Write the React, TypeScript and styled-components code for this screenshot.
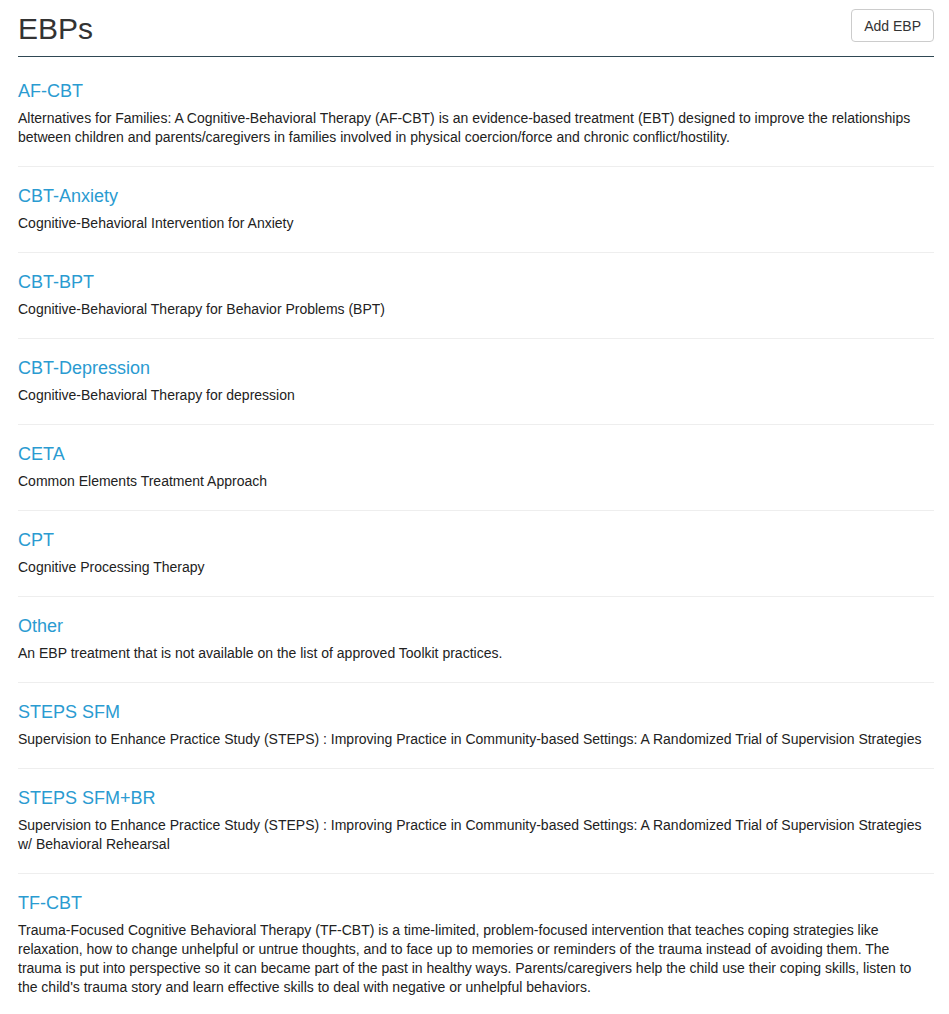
import styled, { createGlobalStyle } from 'styled-components';

interface Ebp {
    code: string;
    description: string;
}

const ebps: Ebp[] = [
    {
        code: 'AF-CBT',
        description:
            'Alternatives for Families: A Cognitive-Behavioral Therapy (AF-CBT) is an evidence-based treatment (EBT) designed to improve the relationships between children and parents/caregivers in families involved in physical coercion/force and chronic conflict/hostility.',
    },
    { code: 'CBT-Anxiety', description: 'Cognitive-Behavioral Intervention for Anxiety' },
    { code: 'CBT-BPT', description: 'Cognitive-Behavioral Therapy for Behavior Problems (BPT)' },
    { code: 'CBT-Depression', description: 'Cognitive-Behavioral Therapy for depression' },
    { code: 'CETA', description: 'Common Elements Treatment Approach' },
    { code: 'CPT', description: 'Cognitive Processing Therapy' },
    {
        code: 'Other',
        description: 'An EBP treatment that is not available on the list of approved Toolkit practices.',
    },
    {
        code: 'STEPS SFM',
        description:
            'Supervision to Enhance Practice Study (STEPS) : Improving Practice in Community-based Settings: A Randomized Trial of Supervision Strategies',
    },
    {
        code: 'STEPS SFM+BR',
        description:
            'Supervision to Enhance Practice Study (STEPS) : Improving Practice in Community-based Settings: A Randomized Trial of Supervision Strategies w/ Behavioral Rehearsal',
    },
    {
        code: 'TF-CBT',
        description:
            "Trauma-Focused Cognitive Behavioral Therapy (TF-CBT) is a time-limited, problem-focused intervention that teaches coping strategies like relaxation, how to change unhelpful or untrue thoughts, and to face up to memories or reminders of the trauma instead of avoiding them. The trauma is put into perspective so it can became part of the past in healthy ways. Parents/caregivers help the child use their coping skills, listen to the child's trauma story and learn effective skills to deal with negative or unhelpful behaviors.",
    },
];

const App = () => {
    return (
        <>
            <GlobalStyle />
            <Page>
                <Header>
                    <Title>EBPs</Title>
                    <AddButton type="button">Add EBP</AddButton>
                </Header>
                <List>
                    {ebps.map((ebp) => (
                        <Item key={ebp.code}>
                            <ItemTitle href="#">{ebp.code}</ItemTitle>
                            <Description>{ebp.description}</Description>
                        </Item>
                    ))}
                </List>
            </Page>
        </>
    );
};

const GlobalStyle = createGlobalStyle`
    body {
        margin: 0;
        background: #fff;
        font-family: "Liberation Sans", Arial, sans-serif;
        color: #222;
    }
`;

const Page = styled.div`
    padding: 0 15px 0 18px;
`;

const Header = styled.div`
    display: flex;
    justify-content: space-between;
    align-items: flex-start;
    padding: 9px 0 11px;
    border-bottom: 1px solid #2f4853;
`;

const Title = styled.h1`
    margin: 3px 0 0;
    font-size: 30px;
    font-weight: normal;
    line-height: 33px;
    color: #333;
`;

const AddButton = styled.button`
    height: 33px;
    padding: 0 12px;
    font-family: "Liberation Sans", Arial, sans-serif;
    font-size: 14px;
    color: #333;
    background: #fff;
    border: 1px solid #ccc;
    border-radius: 4px;
    cursor: pointer;
`;

const List = styled.div`
    padding-top: 5px;
`;

const Item = styled.div`
    padding: 19px 0 19px;
    border-bottom: 1px solid #eee;

    &:last-child {
        border-bottom: none;
    }
`;

const ItemTitle = styled.a`
    display: block;
    margin-bottom: 8px;
    font-size: 18px;
    line-height: 20px;
    color: #2a9bd1;
    text-decoration: none;
`;

const Description = styled.div`
    font-size: 14px;
    line-height: 19px;
    color: #222;
`;

export default App;
